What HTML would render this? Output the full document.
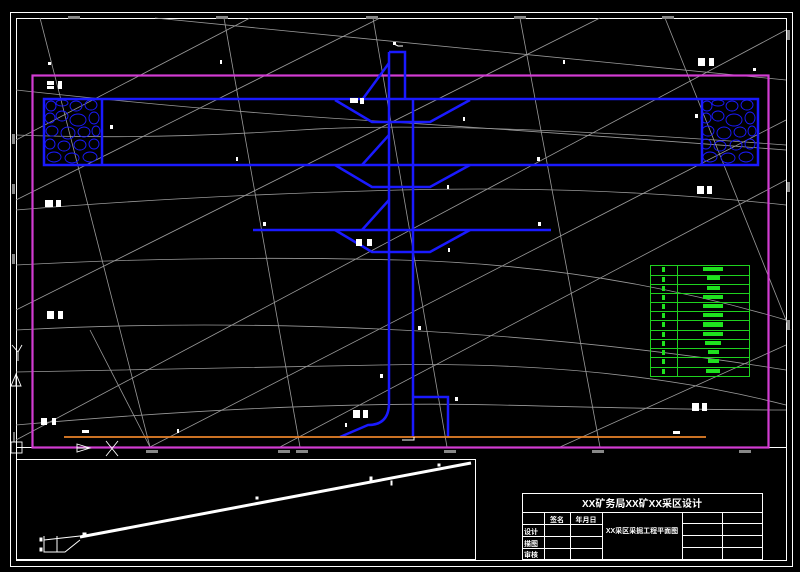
<!DOCTYPE html>
<html><head><meta charset="utf-8"><style>
html,body{margin:0;padding:0;background:#000;width:800px;height:572px;overflow:hidden}
svg{display:block}
text{font-family:"Liberation Sans","Noto Sans CJK SC",sans-serif;fill:#fff;font-weight:bold}
</style></head><body>
<svg width="800" height="572" viewBox="0 0 800 572" xmlns="http://www.w3.org/2000/svg">
<rect width="800" height="572" fill="#000"/>
<rect x="10.5" y="12.5" width="782" height="554" fill="none" stroke="#fff" stroke-width="1"/>
<rect x="16.5" y="18.5" width="770" height="542" fill="none" stroke="#fff" stroke-width="1"/>
<line x1="16" y1="447.5" x2="786" y2="447.5" stroke="#fff"/>
<rect x="16.5" y="459.5" width="459" height="100" fill="none" stroke="#fff"/>
<g stroke="#9a9a9a" stroke-width="0.8" fill="none">
<line x1="40" y1="18" x2="150" y2="447"/>
<line x1="224" y1="18" x2="300" y2="447"/>
<line x1="373" y1="18" x2="447" y2="447"/>
<line x1="520" y1="18" x2="600" y2="447"/>
<line x1="665" y1="18" x2="790" y2="330"/>
<line x1="90" y1="330" x2="150" y2="447"/>
<line x1="16" y1="140" x2="250" y2="18"/>
<line x1="16" y1="310" x2="600" y2="18"/>
<line x1="16" y1="440" x2="786" y2="30"/>
<line x1="280" y1="447" x2="786" y2="180"/>
<line x1="560" y1="447" x2="786" y2="345"/>
<line x1="16" y1="200" x2="380" y2="18"/>
<line x1="150" y1="447" x2="786" y2="120"/>
<line x1="155" y1="18" x2="786" y2="80"/>
<path d="M16 90 Q200 110 360 120 T786 150"/>
<path d="M16 135 Q150 140 300 130 T786 145"/>
<path d="M16 210 Q200 195 400 190 T786 205"/>
<path d="M16 265 Q200 255 400 260 T786 320"/>
<path d="M16 330 Q200 320 400 330 T786 370"/>
<path d="M16 425 Q300 400 500 405 T786 410"/>
<path d="M16 372 Q150 370 380 365 T786 405"/>
</g>
<g fill="#888">
<rect x="68" y="16" width="12" height="3"/><rect x="216" y="16" width="12" height="3"/><rect x="366" y="16" width="12" height="3"/><rect x="514" y="16" width="12" height="3"/><rect x="662" y="16" width="12" height="3"/>
<rect x="146" y="450" width="12" height="3"/><rect x="278" y="450" width="12" height="3"/><rect x="296" y="450" width="12" height="3"/><rect x="444" y="450" width="12" height="3"/><rect x="592" y="450" width="12" height="3"/><rect x="739" y="450" width="12" height="3"/>
<rect x="12" y="134" width="3" height="10"/><rect x="12" y="184" width="3" height="10"/><rect x="12" y="254" width="3" height="10"/><rect x="787" y="30" width="3" height="10"/><rect x="787" y="182" width="3" height="10"/><rect x="787" y="320" width="3" height="10"/>
</g>
<rect x="32.5" y="75.5" width="736" height="372" fill="none" stroke="#d23cd2" stroke-width="2.2"/>
<g stroke="#1a1aff" stroke-width="2.5" fill="none">
<rect x="44" y="99" width="714" height="66"/>
<line x1="102" y1="99" x2="102" y2="165"/><line x1="702" y1="99" x2="702" y2="165"/>
<line x1="253" y1="230" x2="551" y2="230"/>
<path d="M389 52 L389 403 Q389 425 368 425 L340 437"/>
<polyline points="389,52 405,52 405,100"/>
<line x1="413" y1="100" x2="413" y2="437"/>
<polyline points="413,397 448,397 448,437"/>
<polyline points="335,100 372,122 430,122 470,100"/>
<polyline points="335,165 372,187 430,187 470,165"/>
<polyline points="335,230 372,252 430,252 470,230"/>
<line x1="362" y1="100" x2="389" y2="63"/>
<line x1="362" y1="165" x2="389" y2="135"/>
<line x1="362" y1="230" x2="389" y2="200"/>
</g>
<g stroke="#1a1aff" stroke-width="0.9" fill="none">
<g id="rb">
<ellipse cx="51" cy="106" rx="5" ry="5"/><ellipse cx="62" cy="103" rx="6" ry="3"/><ellipse cx="76" cy="106" rx="6" ry="5"/><ellipse cx="91" cy="105" rx="6" ry="5"/>
<ellipse cx="50" cy="118" rx="5" ry="5"/><ellipse cx="62" cy="116" rx="6" ry="5"/><ellipse cx="78" cy="120" rx="8" ry="6"/><ellipse cx="94" cy="118" rx="5" ry="6"/>
<ellipse cx="52" cy="131" rx="6" ry="5"/><ellipse cx="68" cy="133" rx="7" ry="6"/><ellipse cx="84" cy="132" rx="6" ry="5"/><ellipse cx="96" cy="131" rx="4" ry="5"/>
<ellipse cx="50" cy="144" rx="5" ry="5"/><ellipse cx="64" cy="146" rx="6" ry="5"/><ellipse cx="80" cy="145" rx="6" ry="5"/><ellipse cx="94" cy="144" rx="5" ry="5"/>
<ellipse cx="54" cy="157" rx="7" ry="5"/><ellipse cx="72" cy="158" rx="7" ry="5"/><ellipse cx="90" cy="157" rx="7" ry="5"/>
</g>
<use href="#rb" x="656"/>
</g>
<line x1="64" y1="437" x2="706" y2="437" stroke="#e8822a" stroke-width="1.8"/>
<g fill="#fff">
<rect x="47" y="81" width="7" height="4"/><rect x="47" y="86" width="7" height="3"/><rect x="58" y="81" width="4" height="8"/>
<rect x="350" y="98" width="8" height="5"/><rect x="360" y="98" width="4" height="6"/>
<rect x="698" y="58" width="7" height="8"/><rect x="709" y="58" width="5" height="8"/>
<rect x="697" y="186" width="7" height="8"/><rect x="707" y="186" width="5" height="8"/>
<rect x="45" y="200" width="8" height="7"/><rect x="56" y="200" width="5" height="7"/>
<rect x="356" y="239" width="6" height="7"/><rect x="367" y="239" width="5" height="7"/>
<rect x="47" y="311" width="7" height="8"/><rect x="58" y="311" width="5" height="8"/>
<rect x="353" y="410" width="7" height="8"/><rect x="363" y="410" width="5" height="8"/>
<rect x="692" y="403" width="7" height="8"/><rect x="702" y="403" width="5" height="8"/>
<rect x="41" y="418" width="6" height="7"/><rect x="52" y="418" width="4" height="7"/>
<rect x="48" y="62" width="3" height="3"/><rect x="220" y="60" width="2" height="4"/><rect x="563" y="60" width="2" height="4"/>
<rect x="110" y="125" width="3" height="4"/><rect x="236" y="157" width="2" height="4"/><rect x="537" y="157" width="3" height="4"/>
<rect x="263" y="222" width="3" height="4"/><rect x="538" y="222" width="3" height="4"/><rect x="463" y="117" width="2" height="4"/><rect x="447" y="185" width="2" height="4"/><rect x="448" y="248" width="2" height="4"/>
<rect x="418" y="326" width="3" height="4"/><rect x="380" y="374" width="3" height="4"/><rect x="455" y="397" width="3" height="4"/><rect x="345" y="423" width="2" height="4"/>
<rect x="753" y="68" width="3" height="3"/><rect x="695" y="114" width="3" height="4"/><rect x="82" y="430" width="7" height="3"/><rect x="177" y="429" width="2" height="4"/><rect x="673" y="431" width="7" height="3"/>
<rect x="393" y="42" width="3" height="3"/>
</g>
<polyline points="394,44 398,46 403,46" stroke="#fff" fill="none"/>
<polyline points="402,440 414,440 414,437" stroke="#fff" fill="none"/>
<g stroke="#fff" fill="none" stroke-width="0.9">
<path d="M12 345 L18 352 L22 345 M18 352 L18 361"/>
<path d="M11 386 L16 374 L21 386 Z M16 374 L16 386"/>
<rect x="11" y="442" width="11" height="11"/>
<path d="M77 444 L90 448 L77 452 Z M77 448 L90 448"/>
<path d="M106 441 L118 456 M118 441 L106 456"/>
<line x1="14" y1="432" x2="14" y2="442"/>
</g>
<g stroke="#1fd21f" stroke-width="1" fill="none">
<rect x="650.5" y="265.5" width="99" height="111"/>
<line x1="677.5" y1="265" x2="677.5" y2="376"/>
<path d="M650 275.5h99M650 284.5h99M650 293.5h99M650 302.5h99M650 311.5h99M650 320.5h99M650 330.5h99M650 339.5h99M650 348.5h99M650 357.5h99M650 367.5h99"/>
</g>
<g fill="#1fe21f">
<rect x="662" y="267" width="3" height="5"/><rect x="703" y="267" width="20" height="4"/>
<rect x="662" y="277" width="3" height="5"/><rect x="707" y="276" width="13" height="4"/>
<rect x="662" y="286" width="3" height="5"/><rect x="707" y="286" width="13" height="4"/>
<rect x="662" y="295" width="3" height="5"/><rect x="703" y="295" width="20" height="4"/>
<rect x="662" y="304" width="3" height="5"/><rect x="703" y="304" width="20" height="4"/>
<rect x="662" y="313" width="3" height="5"/><rect x="703" y="313" width="20" height="4"/>
<rect x="662" y="322" width="3" height="5"/><rect x="703" y="322" width="20" height="5"/>
<rect x="662" y="332" width="3" height="5"/><rect x="703" y="332" width="20" height="4"/>
<rect x="662" y="341" width="3" height="5"/><rect x="705" y="341" width="16" height="4"/>
<rect x="662" y="350" width="3" height="5"/><rect x="708" y="350" width="11" height="4"/>
<rect x="662" y="359" width="3" height="5"/><rect x="708" y="359" width="11" height="4"/>
<rect x="662" y="369" width="3" height="5"/><rect x="706" y="369" width="14" height="4"/>
</g>
<g stroke="#fff" fill="none">
<line x1="80" y1="537" x2="471" y2="463" stroke-width="3"/>
<path d="M44 536 L44 552 L65 552 L80 540 M44 540 L80 536 M57 536 L57 552" stroke-width="1"/>
<rect x="40" y="538" width="2" height="3" fill="#fff"/><rect x="40" y="548" width="2" height="3" fill="#fff"/>
<rect x="83" y="533" width="3" height="3" fill="#fff"/><rect x="256" y="497" width="2" height="2" fill="#fff"/><rect x="370" y="477" width="2" height="4" fill="#fff"/><rect x="391" y="481" width="1" height="4" fill="#fff"/><rect x="438" y="464" width="2" height="2" fill="#fff"/>
</g>
<g stroke="#fff" stroke-width="1" fill="none">
<rect x="522.5" y="493.5" width="240" height="66"/>
<line x1="522" y1="512.5" x2="762" y2="512.5"/>
<line x1="522" y1="524.5" x2="602" y2="524.5"/>
<line x1="522" y1="536.5" x2="602" y2="536.5"/>
<line x1="522" y1="548.5" x2="602" y2="548.5"/>
<line x1="682" y1="523.5" x2="762" y2="523.5"/>
<line x1="682" y1="535.5" x2="762" y2="535.5"/>
<line x1="682" y1="547.5" x2="762" y2="547.5"/>
<line x1="544.5" y1="512" x2="544.5" y2="560"/>
<line x1="570.5" y1="512" x2="570.5" y2="560"/>
<line x1="602.5" y1="512" x2="602.5" y2="560"/>
<line x1="682.5" y1="512" x2="682.5" y2="560"/>
<line x1="722.5" y1="512" x2="722.5" y2="560"/>
</g>
<text x="642" y="507" font-size="10" text-anchor="middle">XX矿务局XX矿XX采区设计</text>
<text x="557" y="522" font-size="7" text-anchor="middle">签名</text>
<text x="586" y="522" font-size="7" text-anchor="middle">年月日</text>
<text x="642" y="533" font-size="7" text-anchor="middle">XX采区采掘工程平面图</text>
<text x="524" y="534" font-size="7">设计</text>
<text x="524" y="546" font-size="7">描图</text>
<text x="524" y="557" font-size="7">审核</text>
</svg>
</body></html>
